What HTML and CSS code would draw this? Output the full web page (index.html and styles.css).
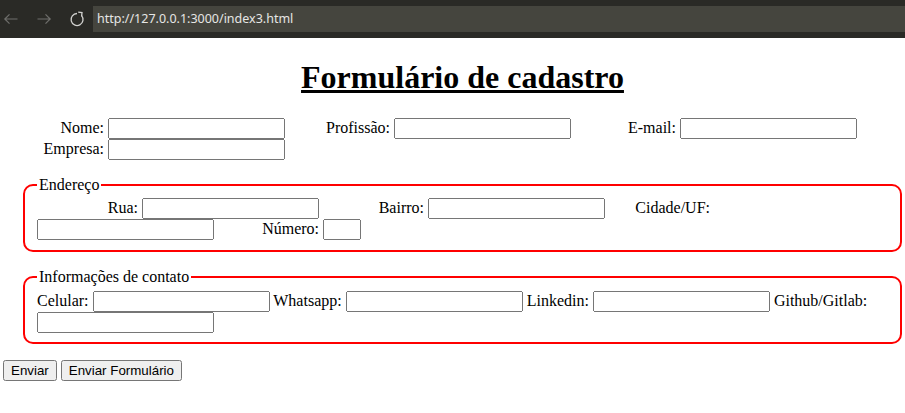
FILE: index.html
```html
<!DOCTYPE html>
<html lang="pt-BR">
<head>
<meta charset="utf-8">
<title>Formulário de cadastro</title>
<link rel="stylesheet" href="styles.css">
</head>
<body>
<div class="browser">
  <div class="nav">
    <svg class="icon icon-dim" width="16" height="16" viewBox="0 0 16 16"><path d="M14.5 8H1.8M6.5 3.3L1.8 8l4.7 4.7" fill="none" stroke="currentColor" stroke-width="1.2"/></svg>
    <svg class="icon icon-dim" width="16" height="16" viewBox="0 0 16 16"><path d="M1.5 8h12.7M9.5 3.3L14.2 8l-4.7 4.7" fill="none" stroke="currentColor" stroke-width="1.2"/></svg>
    <svg class="icon icon-lit" width="16" height="16" viewBox="0 0 16 16"><path d="M12.6 4.6A6 6 0 1 1 8 2.5" fill="none" stroke="currentColor" stroke-width="1.3"/><path d="M9.2 1.2L13 1.6 12.6 5.4" fill="none" stroke="currentColor" stroke-width="1.3"/></svg>
  </div>
  <div class="address">http://127.0.0.1:3000/index3.html</div>
</div>
<main class="page">
  <h1 class="title">Formulário de cadastro</h1>
  <form class="form">
    <div class="basic">
      <label class="lbl" for="nome">Nome:</label>
      <input class="field" type="text" id="nome">
      <label class="lbl" for="profissao">Profissão:</label>
      <input class="field" type="text" id="profissao">
      <label class="lbl" for="email">E-mail:</label>
      <input class="field" type="text" id="email">
      <label class="lbl" for="empresa">Empresa:</label>
      <input class="field" type="text" id="empresa">
    </div>
    <fieldset class="group">
      <legend class="legend">Endereço</legend>
      <label class="lbl" for="rua">Rua:</label>
      <input class="field" type="text" id="rua">
      <label class="lbl" for="bairro">Bairro:</label>
      <input class="field" type="text" id="bairro">
      <label class="lbl" for="cidade">Cidade/UF:</label>
      <input class="field" type="text" id="cidade">
      <label class="lbl" for="numero">Número:</label>
      <input class="field field-num" type="text" id="numero">
    </fieldset>
    <fieldset class="group">
      <legend class="legend">Informações de contato</legend>
      <label for="celular">Celular:</label>
      <input class="field" type="text" id="celular">
      <label for="whatsapp">Whatsapp:</label>
      <input class="field" type="text" id="whatsapp">
      <label for="linkedin">Linkedin:</label>
      <input class="field" type="text" id="linkedin">
      <label for="github">Github/Gitlab:</label>
      <input class="field" type="text" id="github">
    </fieldset>
    <div class="actions">
      <button class="btn" type="submit">Enviar</button>
      <button class="btn" type="submit">Enviar Formulário</button>
    </div>
  </form>
</main>
</body>
</html>
```
FILE: styles.css
```css
html, body {
  margin: 0;
  padding: 0;
  overflow: hidden;
  background: #ffffff;
}

body {
  font-family: "Liberation Serif", "Times New Roman", serif;
  font-size: 16px;
  color: #000000;
}

.browser {
  display: flex;
  align-items: center;
  height: 38px;
  background: #2a2a26;
}

.nav {
  display: flex;
  align-items: center;
  gap: 17px;
  padding-left: 3px;
}

.icon {
  display: block;
}

.icon-dim {
  color: #6f6f6c;
}

.icon-lit {
  color: #d2d2d0;
}

.address {
  margin-left: 8px;
  flex: 1;
  height: 26px;
  line-height: 26px;
  background: #45453e;
  color: #e6e6e4;
  font-family: "Noto Sans", "Open Sans", sans-serif;
  font-size: 12.5px;
  padding-left: 4px;
}

.page {
  width: 919px;
  padding-left: 3px;
}

.title {
  font-size: 32px;
  font-weight: bold;
  text-align: center;
  text-decoration: underline;
  margin: 21.44px 0;
}

.form {
  margin: 0;
}

.basic {
  margin-bottom: 16px;
}

.lbl {
  display: inline-block;
  width: 101px;
  text-align: right;
}

.field {
  box-sizing: border-box;
  width: 177px;
  font-family: "Liberation Sans", Arial, sans-serif;
  font-size: 13.333px;
  margin: 0;
}

.field-num {
  width: 38px;
}

.group {
  margin: 0 20px 16px;
  border: 2px solid #ff0000;
  border-radius: 10px;
  padding: 4.6px 12px 9.5px;
}

.legend {
  padding: 0 2px;
}

.actions {
  margin: 0;
}

.btn {
  font-family: "Liberation Sans", Arial, sans-serif;
  font-size: 13.333px;
  margin: 0;
}
```
